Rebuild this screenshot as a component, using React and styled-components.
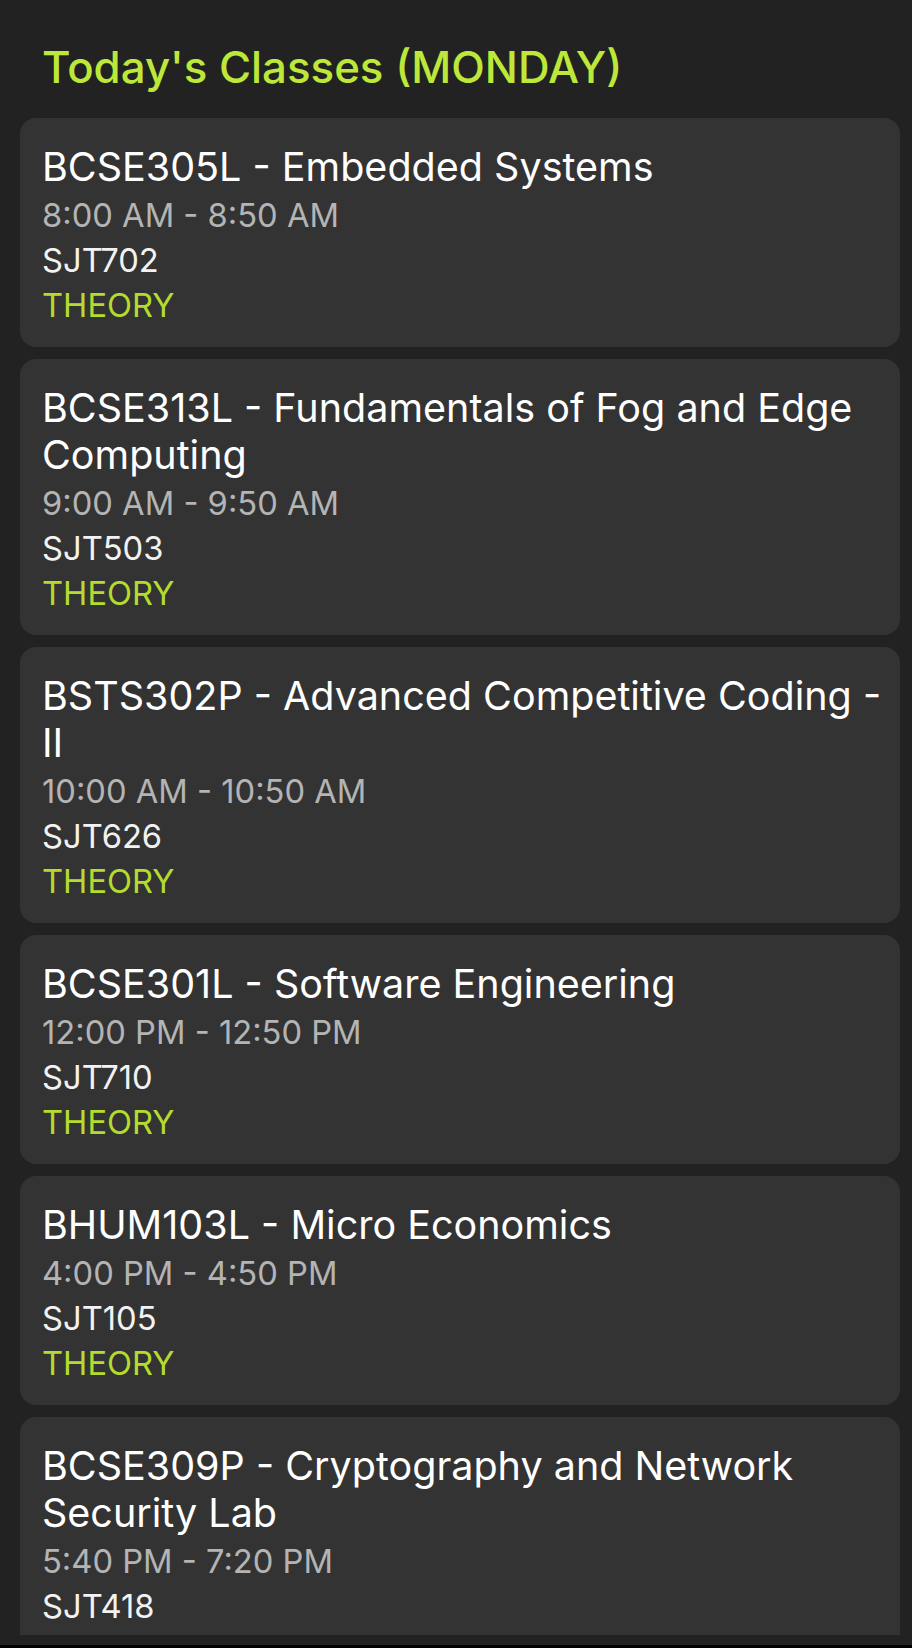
import React from 'react';
import styled, { createGlobalStyle } from 'styled-components';

const GlobalStyle = createGlobalStyle`
  html, body {
    margin: 0;
    padding: 0;
    background: #000;
  }
  body {
    font-family: Inter, "Noto Sans", sans-serif;
    -webkit-font-smoothing: antialiased;
  }
`;

const Screen = styled.div`
  width: 912px;
  height: 1648px;
  display: flex;
  flex-direction: column;
  background: #000;
  overflow: hidden;
`;

const Page = styled.div`
  flex: 1;
  min-height: 0;
  display: flex;
  flex-direction: column;
  background: #222222;
  padding: 40px 12px 10px 20px;
`;

const Heading = styled.h1`
  margin: 0 0 22px 22px;
  font-size: 43.8px;
  line-height: 56px;
  font-weight: 500;
  color: #bde83a;
`;

const Viewport = styled.div`
  flex: 1;
  min-height: 0;
  overflow: hidden;
`;

const List = styled.div`
  display: flex;
  flex-direction: column;
  gap: 12px;
`;

const Card = styled.div`
  background: #333333;
  border-radius: 16px;
  padding: 26px 12px 19px 22px;
`;

const Title = styled.div`
  font-size: 39.5px;
  line-height: 47px;
  color: #ffffff;
  margin-bottom: 2px;
`;

const Line = styled.div`
  font-size: 32.7px;
  line-height: 45px;
  color: ${(p) => p.$color || '#f2f2f2'};
`;

const NavBar = styled.div`
  height: 3px;
  flex-shrink: 0;
  background: #000;
`;

const classes = [
  { code: 'BCSE305L', name: 'Embedded Systems', time: '8:00 AM - 8:50 AM', room: 'SJT702', type: 'THEORY' },
  { code: 'BCSE313L', name: 'Fundamentals of Fog and Edge Computing', time: '9:00 AM - 9:50 AM', room: 'SJT503', type: 'THEORY' },
  { code: 'BSTS302P', name: 'Advanced Competitive Coding - II', time: '10:00 AM - 10:50 AM', room: 'SJT626', type: 'THEORY' },
  { code: 'BCSE301L', name: 'Software Engineering', time: '12:00 PM - 12:50 PM', room: 'SJT710', type: 'THEORY' },
  { code: 'BHUM103L', name: 'Micro Economics', time: '4:00 PM - 4:50 PM', room: 'SJT105', type: 'THEORY' },
  { code: 'BCSE309P', name: 'Cryptography and Network Security Lab', time: '5:40 PM - 7:20 PM', room: 'SJT418', type: 'LAB' },
];

export default function App() {
  return (
    <>
      <GlobalStyle />
      <Screen>
        <Page>
          <Heading>Today's Classes (MONDAY)</Heading>
          <Viewport>
            <List>
              {classes.map((c) => (
                <Card key={c.code}>
                  <Title>{`${c.code} - ${c.name}`}</Title>
                  <Line $color="#b4b4b4">{c.time}</Line>
                  <Line>{c.room}</Line>
                  <Line $color="#b3dc2e">{c.type}</Line>
                </Card>
              ))}
            </List>
          </Viewport>
        </Page>
        <NavBar />
      </Screen>
    </>
  );
}
